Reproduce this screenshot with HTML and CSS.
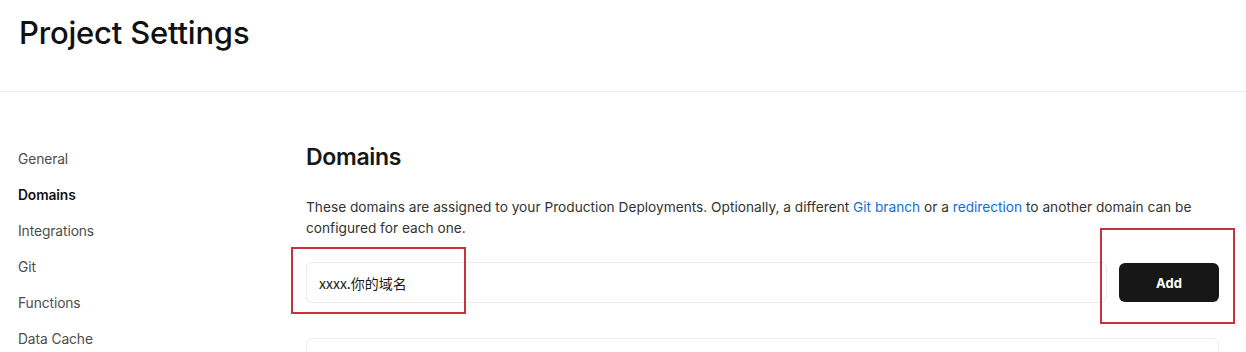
FILE: index.html
```html
<!DOCTYPE html>
<html>

<head>
  <title>Project Settings</title>
  <link rel="stylesheet" href="styles.css">
</head>

<body>
  <header class="page-header">
    <h1 class="page-title">Project Settings</h1>
  </header>
  <div class="page-body">
    <nav class="sidebar">
      <a class="sidebar-item">General</a>
      <a class="sidebar-item active">Domains</a>
      <a class="sidebar-item">Integrations</a>
      <a class="sidebar-item">Git</a>
      <a class="sidebar-item">Functions</a>
      <a class="sidebar-item">Data Cache</a>
    </nav>
    <main class="content">
      <h2 class="section-title">Domains</h2>
      <p class="section-text">
        These domains are assigned to your Production Deployments. Optionally, a different
        <a class="link">Git branch</a> or a <a class="link">redirection</a> to another domain can be
        configured for each one.
      </p>
      <div class="add-row">
        <div class="domain-input-wrap">
          <input class="domain-input" value="xxxx.你的域名">
          <span class="mark mark-input"></span>
        </div>
        <div class="add-wrap">
          <button class="add-button">Add</button>
          <span class="mark mark-button"></span>
        </div>
      </div>
      <div class="domain-card"></div>
    </main>
  </div>
</body>

</html>
```

FILE: styles.css
```css
body {
  margin: 0;
  background: #ffffff;
  color: #171717;
  font-family: Inter, "Noto Sans CJK SC", sans-serif;
  overflow: hidden;
}

.page-header {
  height: 92px;
  border-bottom: 1px solid #ebebeb;
  box-sizing: border-box;
  padding: 13px 0 0 19px;
}

.page-title {
  margin: 0;
  font-size: 31px;
  font-weight: 500;
  line-height: 40px;
  letter-spacing: -0.2px;
  color: #111111;
}

.page-body {
  display: flex;
}

.sidebar {
  width: 306px;
  flex-shrink: 0;
  padding-top: 49px;
  display: flex;
  flex-direction: column;
}

.sidebar-item {
  padding-left: 18px;
  height: 36px;
  line-height: 36px;
  font-size: 13.8px;
  color: #4d4d4d;
  letter-spacing: -0.1px;
}

.sidebar-item.active {
  color: #111111;
  font-weight: 600;
}

.content {
  width: 913px;
  padding-top: 51px;
}

.section-title {
  margin: 0;
  font-size: 23px;
  font-weight: 600;
  line-height: 28px;
  letter-spacing: -0.3px;
  color: #171717;
}

.section-text {
  margin: 26px 0 0 0;
  font-size: 13.7px;
  line-height: 21px;
  color: #333333;
}

.link {
  color: #0f6fcf;
}

.add-row {
  display: flex;
  align-items: center;
  gap: 12px;
  margin-top: 23px;
}

.domain-input-wrap {
  position: relative;
  flex: 1;
}

.domain-input {
  display: block;
  box-sizing: border-box;
  width: 100%;
  height: 41px;
  border: 1px solid #ececec;
  border-radius: 6px;
  padding: 0 12px;
  font-family: "Noto Sans CJK SC", sans-serif;
  font-size: 14px;
  color: #1a1a1a;
  outline: none;
}

.add-wrap {
  position: relative;
}

.add-button {
  display: block;
  width: 100px;
  height: 39px;
  border: none;
  border-radius: 6px;
  background: #171717;
  color: #ffffff;
  font-family: Inter, sans-serif;
  font-size: 13px;
  font-weight: 700;
}

.mark {
  position: absolute;
  border: 2px solid #c8323c;
  pointer-events: none;
}

.mark-input {
  left: -15px;
  top: -15px;
  width: 171px;
  height: 63px;
}

.mark-button {
  left: -19px;
  top: -35px;
  width: 131px;
  height: 92px;
}

.domain-card {
  margin-top: 35px;
  height: 60px;
  border: 1px solid #ececec;
  border-radius: 6px;
}
```
